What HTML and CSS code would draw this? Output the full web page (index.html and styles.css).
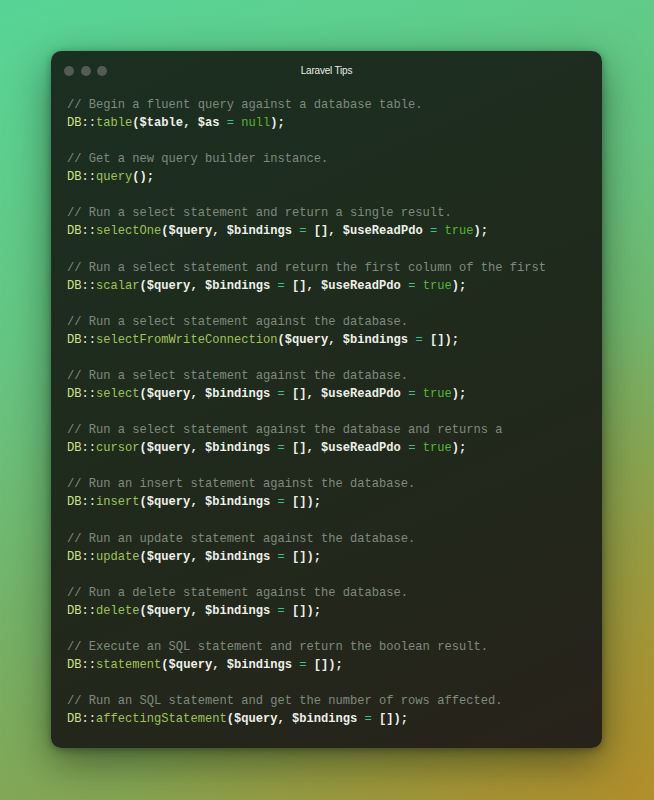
FILE: index.html
```html
<!DOCTYPE html>
<html>
<head>
<meta charset="utf-8">
<link rel="stylesheet" href="styles.css">
</head>
<body>
<div class="stage">
  <div class="window">
    <div class="titlebar">
      <div class="dots"><span class="dot"></span><span class="dot"></span><span class="dot"></span></div>
      <div class="title">Laravel Tips</div>
    </div>
    <div class="code">
      <div class="block">
        <div class="c">// Begin a fluent query against a database table.</div>
        <div class="l"><span class="cl">DB</span><span class="op">::</span><span class="fn">table</span><span class="p">($table, $as </span><span class="eq">=</span><span class="p"> </span><span class="kw">null</span><span class="p">);</span></div>
      </div>
      <div class="block">
        <div class="c">// Get a new query builder instance.</div>
        <div class="l"><span class="cl">DB</span><span class="op">::</span><span class="fn">query</span><span class="p">();</span></div>
      </div>
      <div class="block">
        <div class="c">// Run a select statement and return a single result.</div>
        <div class="l"><span class="cl">DB</span><span class="op">::</span><span class="fn">selectOne</span><span class="p">($query, $bindings </span><span class="eq">=</span><span class="p"> [], $useReadPdo </span><span class="eq">=</span><span class="p"> </span><span class="kw">true</span><span class="p">);</span></div>
      </div>
      <div class="block">
        <div class="c">// Run a select statement and return the first column of the first</div>
        <div class="l"><span class="cl">DB</span><span class="op">::</span><span class="fn">scalar</span><span class="p">($query, $bindings </span><span class="eq">=</span><span class="p"> [], $useReadPdo </span><span class="eq">=</span><span class="p"> </span><span class="kw">true</span><span class="p">);</span></div>
      </div>
      <div class="block">
        <div class="c">// Run a select statement against the database.</div>
        <div class="l"><span class="cl">DB</span><span class="op">::</span><span class="fn">selectFromWriteConnection</span><span class="p">($query, $bindings </span><span class="eq">=</span><span class="p"> []);</span></div>
      </div>
      <div class="block">
        <div class="c">// Run a select statement against the database.</div>
        <div class="l"><span class="cl">DB</span><span class="op">::</span><span class="fn">select</span><span class="p">($query, $bindings </span><span class="eq">=</span><span class="p"> [], $useReadPdo </span><span class="eq">=</span><span class="p"> </span><span class="kw">true</span><span class="p">);</span></div>
      </div>
      <div class="block">
        <div class="c">// Run a select statement against the database and returns a</div>
        <div class="l"><span class="cl">DB</span><span class="op">::</span><span class="fn">cursor</span><span class="p">($query, $bindings </span><span class="eq">=</span><span class="p"> [], $useReadPdo </span><span class="eq">=</span><span class="p"> </span><span class="kw">true</span><span class="p">);</span></div>
      </div>
      <div class="block">
        <div class="c">// Run an insert statement against the database.</div>
        <div class="l"><span class="cl">DB</span><span class="op">::</span><span class="fn">insert</span><span class="p">($query, $bindings </span><span class="eq">=</span><span class="p"> []);</span></div>
      </div>
      <div class="block">
        <div class="c">// Run an update statement against the database.</div>
        <div class="l"><span class="cl">DB</span><span class="op">::</span><span class="fn">update</span><span class="p">($query, $bindings </span><span class="eq">=</span><span class="p"> []);</span></div>
      </div>
      <div class="block">
        <div class="c">// Run a delete statement against the database.</div>
        <div class="l"><span class="cl">DB</span><span class="op">::</span><span class="fn">delete</span><span class="p">($query, $bindings </span><span class="eq">=</span><span class="p"> []);</span></div>
      </div>
      <div class="block">
        <div class="c">// Execute an SQL statement and return the boolean result.</div>
        <div class="l"><span class="cl">DB</span><span class="op">::</span><span class="fn">statement</span><span class="p">($query, $bindings </span><span class="eq">=</span><span class="p"> []);</span></div>
      </div>
      <div class="block">
        <div class="c">// Run an SQL statement and get the number of rows affected.</div>
        <div class="l"><span class="cl">DB</span><span class="op">::</span><span class="fn">affectingStatement</span><span class="p">($query, $bindings </span><span class="eq">=</span><span class="p"> []);</span></div>
      </div>
    </div>
  </div>
</div>
</body>
</html>
```

FILE: styles.css
```css
html, body {
  margin: 0;
  padding: 0;
}
body {
  width: 654px;
  height: 800px;
  overflow: hidden;
}
.stage {
  width: 654px;
  height: 800px;
  box-sizing: border-box;
  padding: 51px 52px 0 51px;
  background:
    radial-gradient(ellipse 80% 60% at 100% 100%, rgba(178, 142, 42, 0.95) 0%, rgba(178, 142, 42, 0) 100%),
    linear-gradient(160deg, #57d596 0%, #66c582 35%, #78ae62 65%, #969a40 100%);
}
.window {
  width: 551px;
  height: 697px;
  box-sizing: border-box;
  border-radius: 10px;
  background: linear-gradient(155deg, #1b2f20 0%, #1f2a1c 50%, #28231a 100%);
  box-shadow: 0 14px 40px rgba(20, 40, 20, 0.55), 0 2px 8px rgba(0, 0, 0, 0.35);
  display: flex;
  flex-direction: column;
  padding: 0 16px;
}
.titlebar {
  position: relative;
  height: 40px;
  display: flex;
  align-items: center;
}
.dots {
  display: flex;
  gap: 6.5px;
  margin-left: -3px;
}
.dot {
  width: 10px;
  height: 10px;
  border-radius: 50%;
  background: #545b55;
}
.title {
  position: absolute;
  left: 0;
  right: 0;
  top: 0;
  line-height: 40px;
  text-align: center;
  font-family: "Liberation Sans", Arial, sans-serif;
  font-size: 10px;
  color: #e8ece6;
  letter-spacing: -0.2px;
}
.code {
  display: flex;
  flex-direction: column;
  gap: 18.2px;
  padding-top: 5px;
  font-family: "Liberation Mono", "Courier New", monospace;
  font-size: 12.1px;
  line-height: 18px;
  white-space: pre;
}
.block {
  display: flex;
  flex-direction: column;
}
.c {
  color: #7f8a7e;
}
.l {
  color: #e6e8e2;
}
.cl {
  color: #cfe08c;
}
.op {
  color: #e6e8e2;
}
.fn {
  color: #9fc35a;
}
.p {
  color: #eef0ea;
  font-weight: bold;
}
.eq {
  color: #3fbf86;
}
.kw {
  color: #58b531;
}
```
